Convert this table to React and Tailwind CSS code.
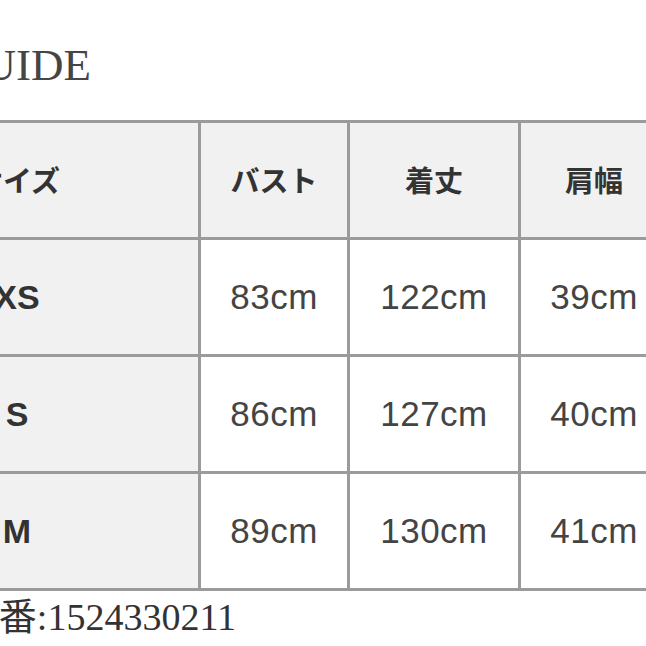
import React from "react";

const rows = [
  { size: "XS", bust: "83cm", length: "122cm", shoulder: "39cm" },
  { size: "S", bust: "86cm", length: "127cm", shoulder: "40cm" },
  { size: "M", bust: "89cm", length: "130cm", shoulder: "41cm" },
];

const headCell =
  "bg-[#f1f1f1] flex items-center justify-center text-[29px] font-bold text-[#333] font-['Noto_Sans_CJK_JP',sans-serif]";
const sizeCell =
  "bg-[#f1f1f1] flex items-center justify-center text-[34px] font-bold text-[#333] font-['Liberation_Sans','Noto_Sans_CJK_JP',sans-serif]";
const valueCell =
  "bg-white flex items-center justify-center text-[35px] tracking-[0.5px] text-[#444] font-['Liberation_Sans','Noto_Sans_CJK_JP',sans-serif]";

const App = () => {
  return (
    <div className="w-[646px] h-[646px] overflow-hidden bg-white">
      {/* title, cut off at the left edge */}
      <div className="w-[91px] h-[120px] flex justify-end pt-[43px]">
        <div className="whitespace-nowrap text-[45px] leading-[45px] text-[#454545] font-['Liberation_Serif','Noto_Sans_CJK_JP',serif]">
          SIZE GUIDE
        </div>
      </div>

      {/* size table */}
      <div className="ml-[-167px] w-max grid grid-cols-[362px_146px_168px_146px] auto-rows-[114px] gap-[3px] p-[3px] bg-[#9b9b9b]">
        <div className={headCell}>サイズ</div>
        <div className={headCell}>バスト</div>
        <div className={headCell}>着丈</div>
        <div className={headCell}>肩幅</div>
        {rows.map((r) => (
          <React.Fragment key={r.size}>
            <div className={sizeCell}>{r.size}</div>
            <div className={valueCell}>{r.bust}</div>
            <div className={valueCell}>{r.length}</div>
            <div className={valueCell}>{r.shoulder}</div>
          </React.Fragment>
        ))}
      </div>

      {/* item number */}
      <div className="w-[236px] flex justify-end pt-[4px]">
        <div className="whitespace-nowrap text-[38px] leading-[44px] text-[#333] font-['Liberation_Serif','Noto_Sans_CJK_JP',serif]">
          品番:1524330211
        </div>
      </div>
    </div>
  );
};

export default App;
